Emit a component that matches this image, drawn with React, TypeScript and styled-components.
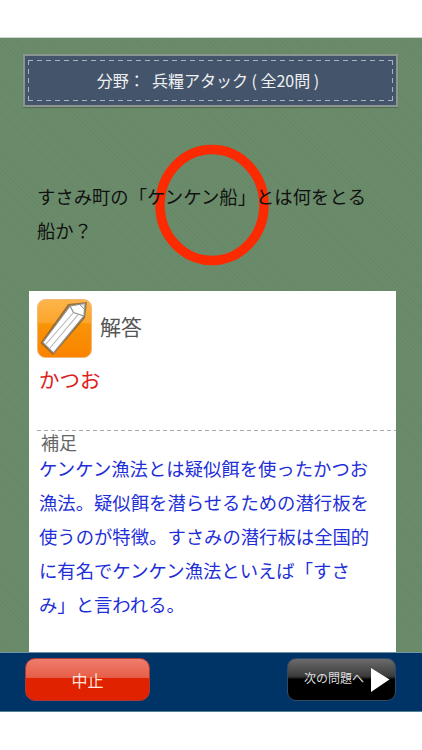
import React from "react";
import styled, { createGlobalStyle } from "styled-components";

const Global = createGlobalStyle`
  html, body { margin: 0; padding: 0; background: #fff; }
  body {
    font-family: "Noto Sans CJK JP", "Noto Sans", sans-serif;
    text-spacing-trim: space-all;
  }
`;

const Page = styled.div`
  width: 422px;
  height: 750px;
  display: flex;
  flex-direction: column;
  overflow: hidden;
  background: #fff;
`;
const TopGap = styled.div`
  height: 37px;
  flex: none;
  background: #fff;
`;
const Board = styled.main`
  position: relative;
  height: 615px;
  flex: none;
  box-sizing: border-box;
  padding: 16px 26px 0 23px;
  display: flex;
  flex-direction: column;
  background-color: #6b8c6b;
  background-image: repeating-linear-gradient(45deg, rgba(0,0,0,.035) 0 1px, transparent 1px 3px);
  border-top: 1px solid #cfdacf;
`;
const Banner = styled.header`
  height: 53px;
  box-sizing: border-box;
  flex: none;
  background: #44546a;
  border: 2px solid #8a968f;
  padding: 4px 3px;
  margin-right: -2px;
  box-shadow: 0 1px 1px rgba(0,0,0,.2);
`;
const Stitch = styled.div`
  height: 100%;
  box-sizing: border-box;
  background-image:
    repeating-linear-gradient(90deg, #aab4bd 0 5px, transparent 5px 9px),
    repeating-linear-gradient(90deg, #aab4bd 0 5px, transparent 5px 9px),
    repeating-linear-gradient(0deg, #aab4bd 0 5px, transparent 5px 9px),
    repeating-linear-gradient(0deg, #aab4bd 0 5px, transparent 5px 9px);
  background-size: 100% 1px, 100% 1px, 1px 100%, 1px 100%;
  background-position: 0 0, 0 100%, 0 0, 100% 0;
  background-repeat: no-repeat;
  display: flex;
  align-items: center;
  justify-content: center;
  padding: 0 5px 1px 0;
  color: #eef1f3;
  font-size: 16px;
  white-space: pre;
`;
const Question = styled.p`
  position: relative;
  z-index: 1;
  margin: 72px 0 0 14px;
  width: 335px;
  height: 112px;
  flex: none;
  font-size: 18.35px;
  line-height: 34px;
  color: #111;
`;
const Ring = styled.svg`
  position: absolute;
  left: 154px;
  top: 105px;
`;
const Card = styled.section`
  flex: 1;
  min-height: 0;
  margin-left: 6px;
  background: #fff;
  padding: 8px 8px 0 8px;
  display: flex;
  flex-direction: column;
`;
const AnswerHead = styled.div`
  display: flex;
  align-items: center;
  gap: 8px;
  height: 58px;
  flex: none;
`;
const AnswerLabel = styled.span`
  font-size: 21px;
  color: #555;
  position: relative;
  top: -2px;
`;
const AnswerText = styled.div`
  margin: 6px 0 0 2px;
  height: 50px;
  font-size: 20.5px;
  line-height: 32px;
  color: #e0201c;
  flex: none;
`;
const Divider = styled.div`
  height: 1px;
  margin: 17px -8px 0 0;
  flex: none;
  background: repeating-linear-gradient(90deg, #a9a9a9 0 4px, transparent 4px 7px);
`;
const NoteLabel = styled.div`
  margin-left: 4px;
  font-size: 18px;
  line-height: 22px;
  color: #666;
  flex: none;
`;
const NoteText = styled.p`
  margin: -2px 0 0 2px;
  width: 333px;
  font-size: 18.35px;
  line-height: 34px;
  color: #1f2fd8;
`;
const Footer = styled.footer`
  height: 60px;
  flex: none;
  box-sizing: border-box;
  background: #003366;
  border-top: 1px solid #6e93a8;
  border-bottom: 1px solid #55808f;
  padding: 5px 26px 0 25px;
  display: flex;
  justify-content: space-between;
  align-items: flex-start;
`;
const StopButton = styled.button`
  width: 125px;
  height: 43px;
  padding: 1px 0 0;
  border-radius: 10px;
  border: 1px solid #a83a38;
  background: linear-gradient(#ee7c6c 0%, #e65f48 45%, #e02200 47%, #e02200 100%);
  color: #ffe2da;
  font: 400 16px "Noto Sans CJK JP", sans-serif;
`;
const NextButton = styled.button`
  width: 109px;
  height: 43px;
  padding: 0 5px 0 16px;
  border-radius: 9px;
  border: 1px solid #2f4a66;
  background: linear-gradient(#6b6b6b 0%, #3b3b3b 42%, #000 50%, #000 100%);
  color: #dcdcdc;
  font: 400 12px "Noto Sans CJK JP", sans-serif;
  display: flex;
  align-items: center;
  justify-content: space-between;
  white-space: nowrap;
`;
const NextLabel = styled.span`
  position: relative;
  top: -2px;
`;
const BottomGap = styled.div`
  flex: 1;
  background: #fff;
`;

const PencilIcon = () => (
  <svg width="55" height="59" viewBox="0 0 55 59" aria-hidden="true">
    <defs>
      <linearGradient id="og" x1="0" y1="0" x2="0" y2="1">
        <stop offset="0" stopColor="#fdb54a" />
        <stop offset="0.4" stopColor="#fca52c" />
        <stop offset="0.42" stopColor="#f99407" />
        <stop offset="1" stopColor="#fb8300" />
      </linearGradient>
    </defs>
    <rect x="0.5" y="0.5" width="54" height="58" rx="8" fill="url(#og)" stroke="#f0b878" />
    <path d="M3.5 44 L31 5 L50 3 L48 19 L16 56 Z" fill="#5e4a30" opacity=".6" />
    <path d="M5.7 43.5 L33 7 L48 4.5 L47 17 L16.5 54 Z" fill="#fff" stroke="#8f8f8f" strokeWidth="1.2" />
    <path d="M33 7 L36.5 13.5 L47 17" fill="none" stroke="#8f8f8f" strokeWidth="1.2" />
    <path d="M8.5 45.5 L36.5 13.5" fill="none" stroke="#b5b5b5" strokeWidth="1.1" />
    <path d="M12.5 49.5 L41.5 15.2" fill="none" stroke="#b5b5b5" strokeWidth="1.1" />
    <path d="M42.5 5.5 L48 4.5 L47.5 10.5 Z" fill="#e4e4e4" stroke="#8a8a8a" strokeWidth=".8" />
  </svg>
);

const PlayIcon = () => (
  <svg width="19" height="24" viewBox="0 0 19 24" aria-hidden="true">
    <path d="M0 0 L18.5 11.5 L0 24 Z" fill="#fff" />
  </svg>
);

export default function App() {
  return (
    <Page>
      <Global />
      <TopGap />
      <Board>
        <Banner>
          <Stitch>{"分野：  兵糧アタック ( 全20問 )"}</Stitch>
        </Banner>
        <Question>すさみ町の「ケンケン船」とは何をとる船か？</Question>
        <Ring width="116" height="124" viewBox="0 0 116 124" aria-hidden="true">
          <ellipse cx="58" cy="62" rx="52" ry="55.5" fill="none" stroke="#fb2a00" strokeWidth="9.5" />
        </Ring>
        <Card>
          <AnswerHead>
            <PencilIcon />
            <AnswerLabel>解答</AnswerLabel>
          </AnswerHead>
          <AnswerText>かつお</AnswerText>
          <Divider />
          <NoteLabel>補足</NoteLabel>
          <NoteText>
            ケンケン漁法とは疑似餌を使ったかつお漁法。疑似餌を潜らせるための潜行板を使うのが特徴。すさみの潜行板は全国的に有名でケンケン漁法といえば「すさみ」と言われる。
          </NoteText>
        </Card>
      </Board>
      <Footer>
        <StopButton>中止</StopButton>
        <NextButton>
          <NextLabel>次の問題へ</NextLabel>
          <PlayIcon />
        </NextButton>
      </Footer>
      <BottomGap />
    </Page>
  );
}
